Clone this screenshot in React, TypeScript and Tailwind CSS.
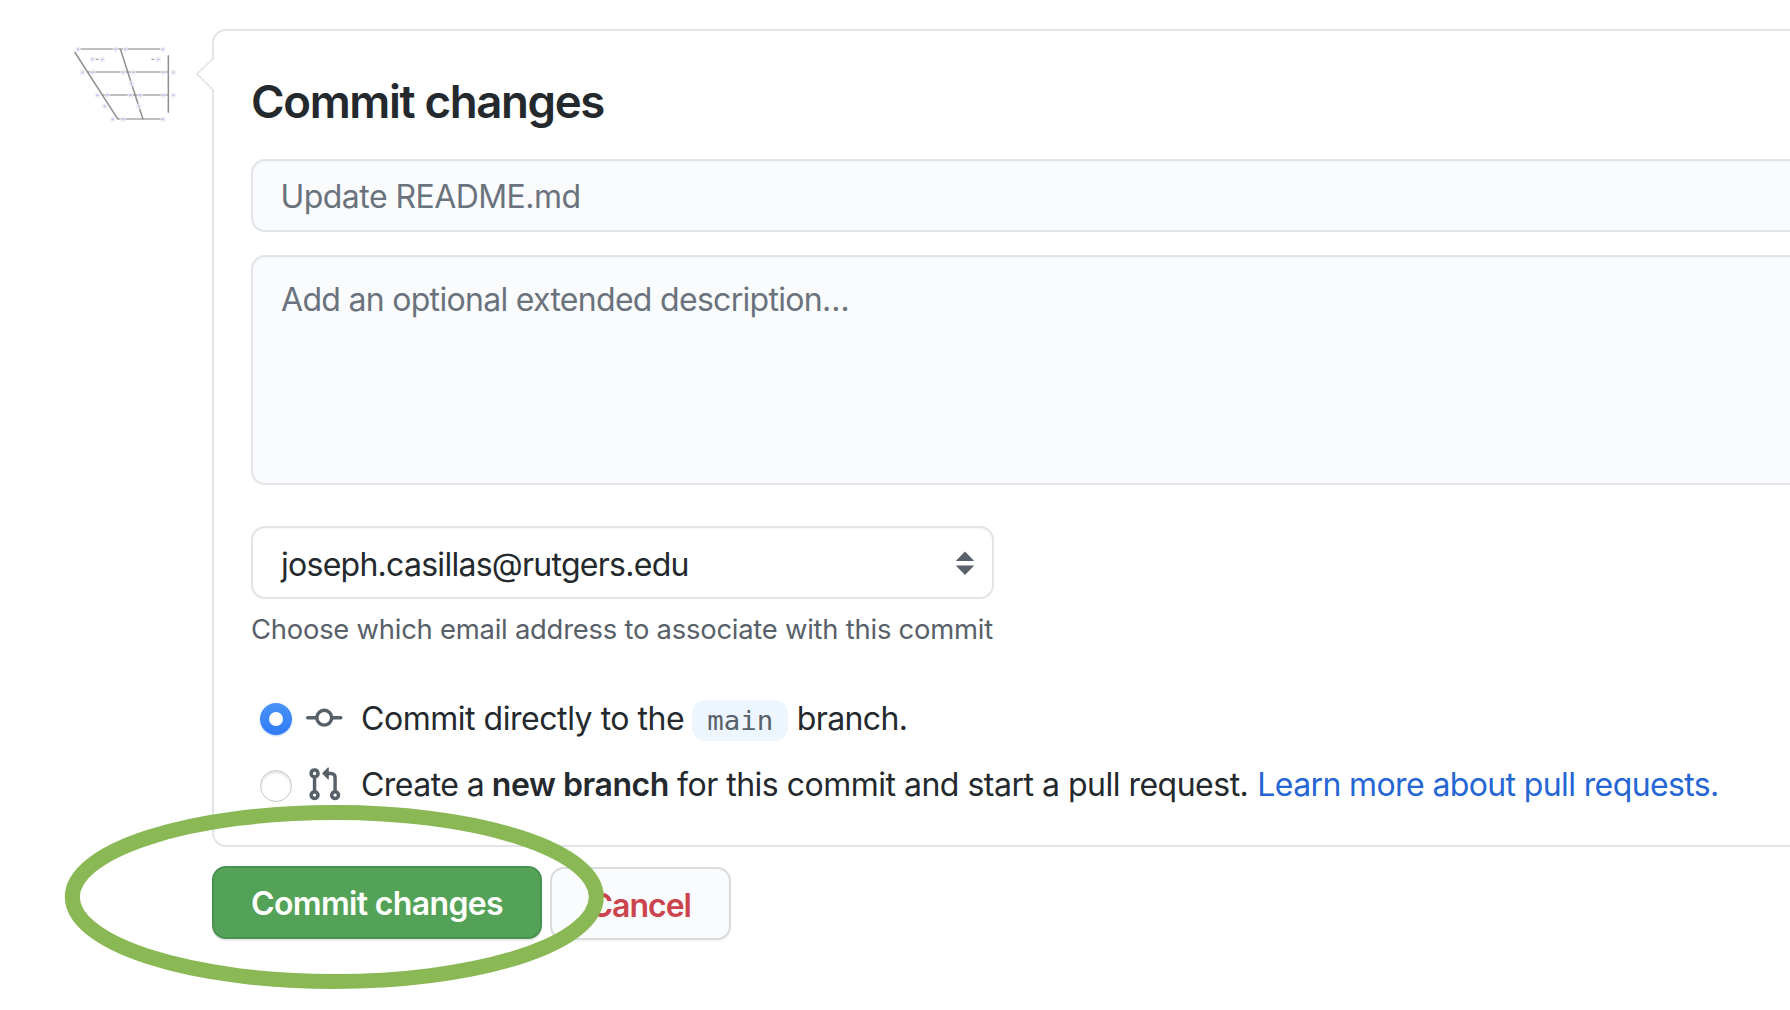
function Avatar() {
  const dots: [number, number][] = [
    [54, 58], [166, 58], [196, 58], [309, 58], [97, 88], [127, 88], [295, 88],
    [67, 127], [98, 127], [189, 127], [220, 127], [310, 127], [340, 127],
    [214, 161], [112, 196], [142, 196], [211, 196], [241, 196], [310, 196], [340, 196],
    [134, 229], [236, 229], [158, 268], [189, 268], [309, 268],
  ];
  return (
    <svg className="ml-[60px] mt-[30px] h-[100px] w-[120px]" viewBox="0 0 360 300" fill="none">
      <g stroke="#bfbfbf" strokeWidth="5.5">
        <path d="M60 57H302M82 126H325M126 195H325M172 267H306" />
      </g>
      <g stroke="#8f8f8f" strokeWidth="4.5">
        <path d="M44 66L174 268M181 57L249 268M325 76V248" />
      </g>
      <path d="M107 88H116M274 88H283" stroke="#888" strokeWidth="3" />
      {dots.map(([x, y]) => (
        <g key={`${x}-${y}`}>
          <circle cx={x} cy={y} r="8.5" fill="#ececf0" fillOpacity="0.75" />
          <circle cx={x} cy={y} r="3.4" fill="#c0bef5" />
        </g>
      ))}
    </svg>
  );
}

function CommitIcon() {
  return (
    <svg className="ml-[14px] h-[36.5px] w-[36.5px] shrink-0" viewBox="0 0 16 16" fill="#586069">
      <path
        fillRule="evenodd"
        d="M10.5 7.75a2.5 2.5 0 11-5 0 2.5 2.5 0 015 0zm1.43.75a4.002 4.002 0 01-7.86 0H.75a.75.75 0 110-1.5h3.32a4.001 4.001 0 017.86 0h3.32a.75.75 0 110 1.5h-3.32z"
      />
    </svg>
  );
}

function PullRequestIcon() {
  return (
    <svg className="ml-[14px] h-[36.5px] w-[36.5px] shrink-0" viewBox="0 0 16 16" fill="#586069">
      <path
        fillRule="evenodd"
        d="M7.177 3.073L9.573.677A.25.25 0 0110 .854v4.792a.25.25 0 01-.427.177L7.177 3.427a.25.25 0 010-.354zM3.75 2.5a.75.75 0 100 1.5.75.75 0 000-1.5zm-2.25.75a2.25 2.25 0 113 2.122v5.256a2.251 2.251 0 11-1.5 0V5.372A2.25 2.25 0 011.5 3.25zM11 2.5h-1V4h1a1 1 0 011 1v5.628a2.251 2.251 0 101.5 0V5A2.5 2.5 0 0011 2.5zm1 10.25a.75.75 0 111.5 0 .75.75 0 01-1.5 0zM3.75 12a.75.75 0 100 1.5.75.75 0 000-1.5z"
      />
    </svg>
  );
}

export default function App() {
  return (
    <div className="relative h-[1010px] w-full overflow-hidden bg-white font-['Inter',sans-serif] text-[32px] text-[#24292e]">
      <div className="flex">
        <div className="w-[212px] shrink-0">
          <Avatar />
        </div>

        <div className="w-[1640px] shrink-0 pt-[29px]">
          <section className="relative h-[818px] rounded-[14px] border-2 border-[#e1e4e8] px-[37px]">
            <svg className="absolute -left-[19px] top-[25px] h-[37px] w-[21px]" viewBox="0 0 21 37">
              <path d="M21 2H18.5L2 18L18.5 35H21Z" fill="#fff" />
              <path d="M19 1.5L2 18L19 35" fill="none" stroke="#e1e2e7" strokeWidth="1.7" />
            </svg>

            <h1 className="mt-[37px] text-[45.6px] font-semibold leading-[68px] tracking-[-1.36px]">Commit changes</h1>

            <div className="mt-[23px] h-[73px] rounded-[14px] border-2 border-[#e1e4e8] bg-[#fafbfc] pl-[27.5px] pt-px leading-[69px] tracking-[-0.55px] text-[#6a737d] shadow-[inset_0_2px_0_rgba(225,228,232,0.2)]">
              Update README.md
            </div>

            <div className="mt-[23px] h-[230px] rounded-[14px] border-2 border-[#e1e4e8] bg-[#fafbfc] pl-[28px] pt-[20px] leading-[46px] tracking-[-0.7px] text-[#6a737d] shadow-[inset_0_2px_0_rgba(225,228,232,0.2)]">
              Add an optional extended description…
            </div>

            <div className="mt-[41px] flex h-[73px] w-[743px] items-center justify-between rounded-[14px] border-2 border-[#e1e4e8] bg-white pl-[28px] pr-[18px] shadow-[inset_0_2px_0_rgba(225,228,232,0.2)]">
              <span className="pt-[5px] leading-[46px] tracking-[-0.73px]">joseph.casillas@rutgers.edu</span>
              <svg className="h-[24px] w-[18px]" viewBox="0 0 18 24" fill="#586069">
                <path d="M9 .5L17.8 9.5V10H.2V9.5ZM9 24L.2 15V14.5H17.8V15Z" />
              </svg>
            </div>

            <p className="mt-[10px] text-[27.4px] leading-10 tracking-[-0.23px] text-[#586069]">
              Choose which email address to associate with this commit
            </p>

            <div className="mt-[47px] flex h-11 items-center whitespace-pre leading-[44px]">
              <span className="ml-[9px] mt-[2px] flex size-8 shrink-0 items-center justify-center rounded-full bg-linear-to-b from-[#4a94f8] to-[#2f7af6] shadow-[0_1px_2px_rgba(47,122,246,0.35)]">
                <span className="size-[14px] rounded-full bg-white" />
              </span>
              <CommitIcon />
              <span className="ml-[18.5px] mt-[2px] tracking-[-0.46px]">Commit directly to the</span>
              <code className="ml-[8px] mt-[5px] flex h-[41px] w-24 shrink-0 items-center justify-center rounded-[14px] bg-[#edf5ff] pt-px font-['DejaVu_Sans_Mono',monospace] text-[27.4px] text-[#586069]">
                main
              </code>
              <span className="ml-[8.5px] mt-[2px] tracking-[-0.62px]">branch.</span>
            </div>

            <div className="mt-[22px] flex h-11 items-center whitespace-pre leading-[44px]">
              <span className="ml-[9px] mt-[4px] size-8 shrink-0 rounded-full border-[1.5px] border-[#c9c9c9] bg-white shadow-[inset_0_2px_3px_rgba(0,0,0,0.12)]" />
              <PullRequestIcon />
              <span className="ml-[18.5px] mt-[2px] tracking-[-0.55px]">Create a</span>
              <strong className="ml-[7.5px] mt-[2px] font-semibold tracking-[-0.42px]">new branch</strong>
              <span className="ml-[8px] mt-[2px] tracking-[-0.5px]">for this commit and start a pull request.</span>
              <a className="ml-[9px] mt-[2px] tracking-[-0.62px] text-[#2566d4]">Learn more about pull requests.</a>
            </div>
          </section>

          <div className="mt-[19px] flex items-start">
            <button className="flex h-[73px] w-[330px] items-center justify-center rounded-[14px] border-2 border-[#489150] bg-[#54a257] pt-[3px] font-semibold tracking-[-0.66px] text-white shadow-[0_2px_0_rgba(27,31,35,0.1),inset_0_2px_0_rgba(255,255,255,0.03)]">
              Commit changes
            </button>
            <button className="ml-[8px] mt-px flex h-[73px] w-[181px] items-center rounded-[14px] border-2 border-[#d9dbde] bg-[#fafbfc] pl-[37.5px] pt-[4px] font-semibold tracking-[-1px] text-[#cb444d] shadow-[0_2px_0_rgba(27,31,35,0.04)]">
              Cancel
            </button>
          </div>
        </div>
      </div>

      <svg className="absolute left-[60px] top-[800px] h-[200px] w-[550px]" viewBox="60 800 550 200">
        <ellipse cx="334.3" cy="897" rx="262" ry="84.5" fill="none" stroke="#89b854" strokeWidth="15" />
      </svg>
    </div>
  );
}
